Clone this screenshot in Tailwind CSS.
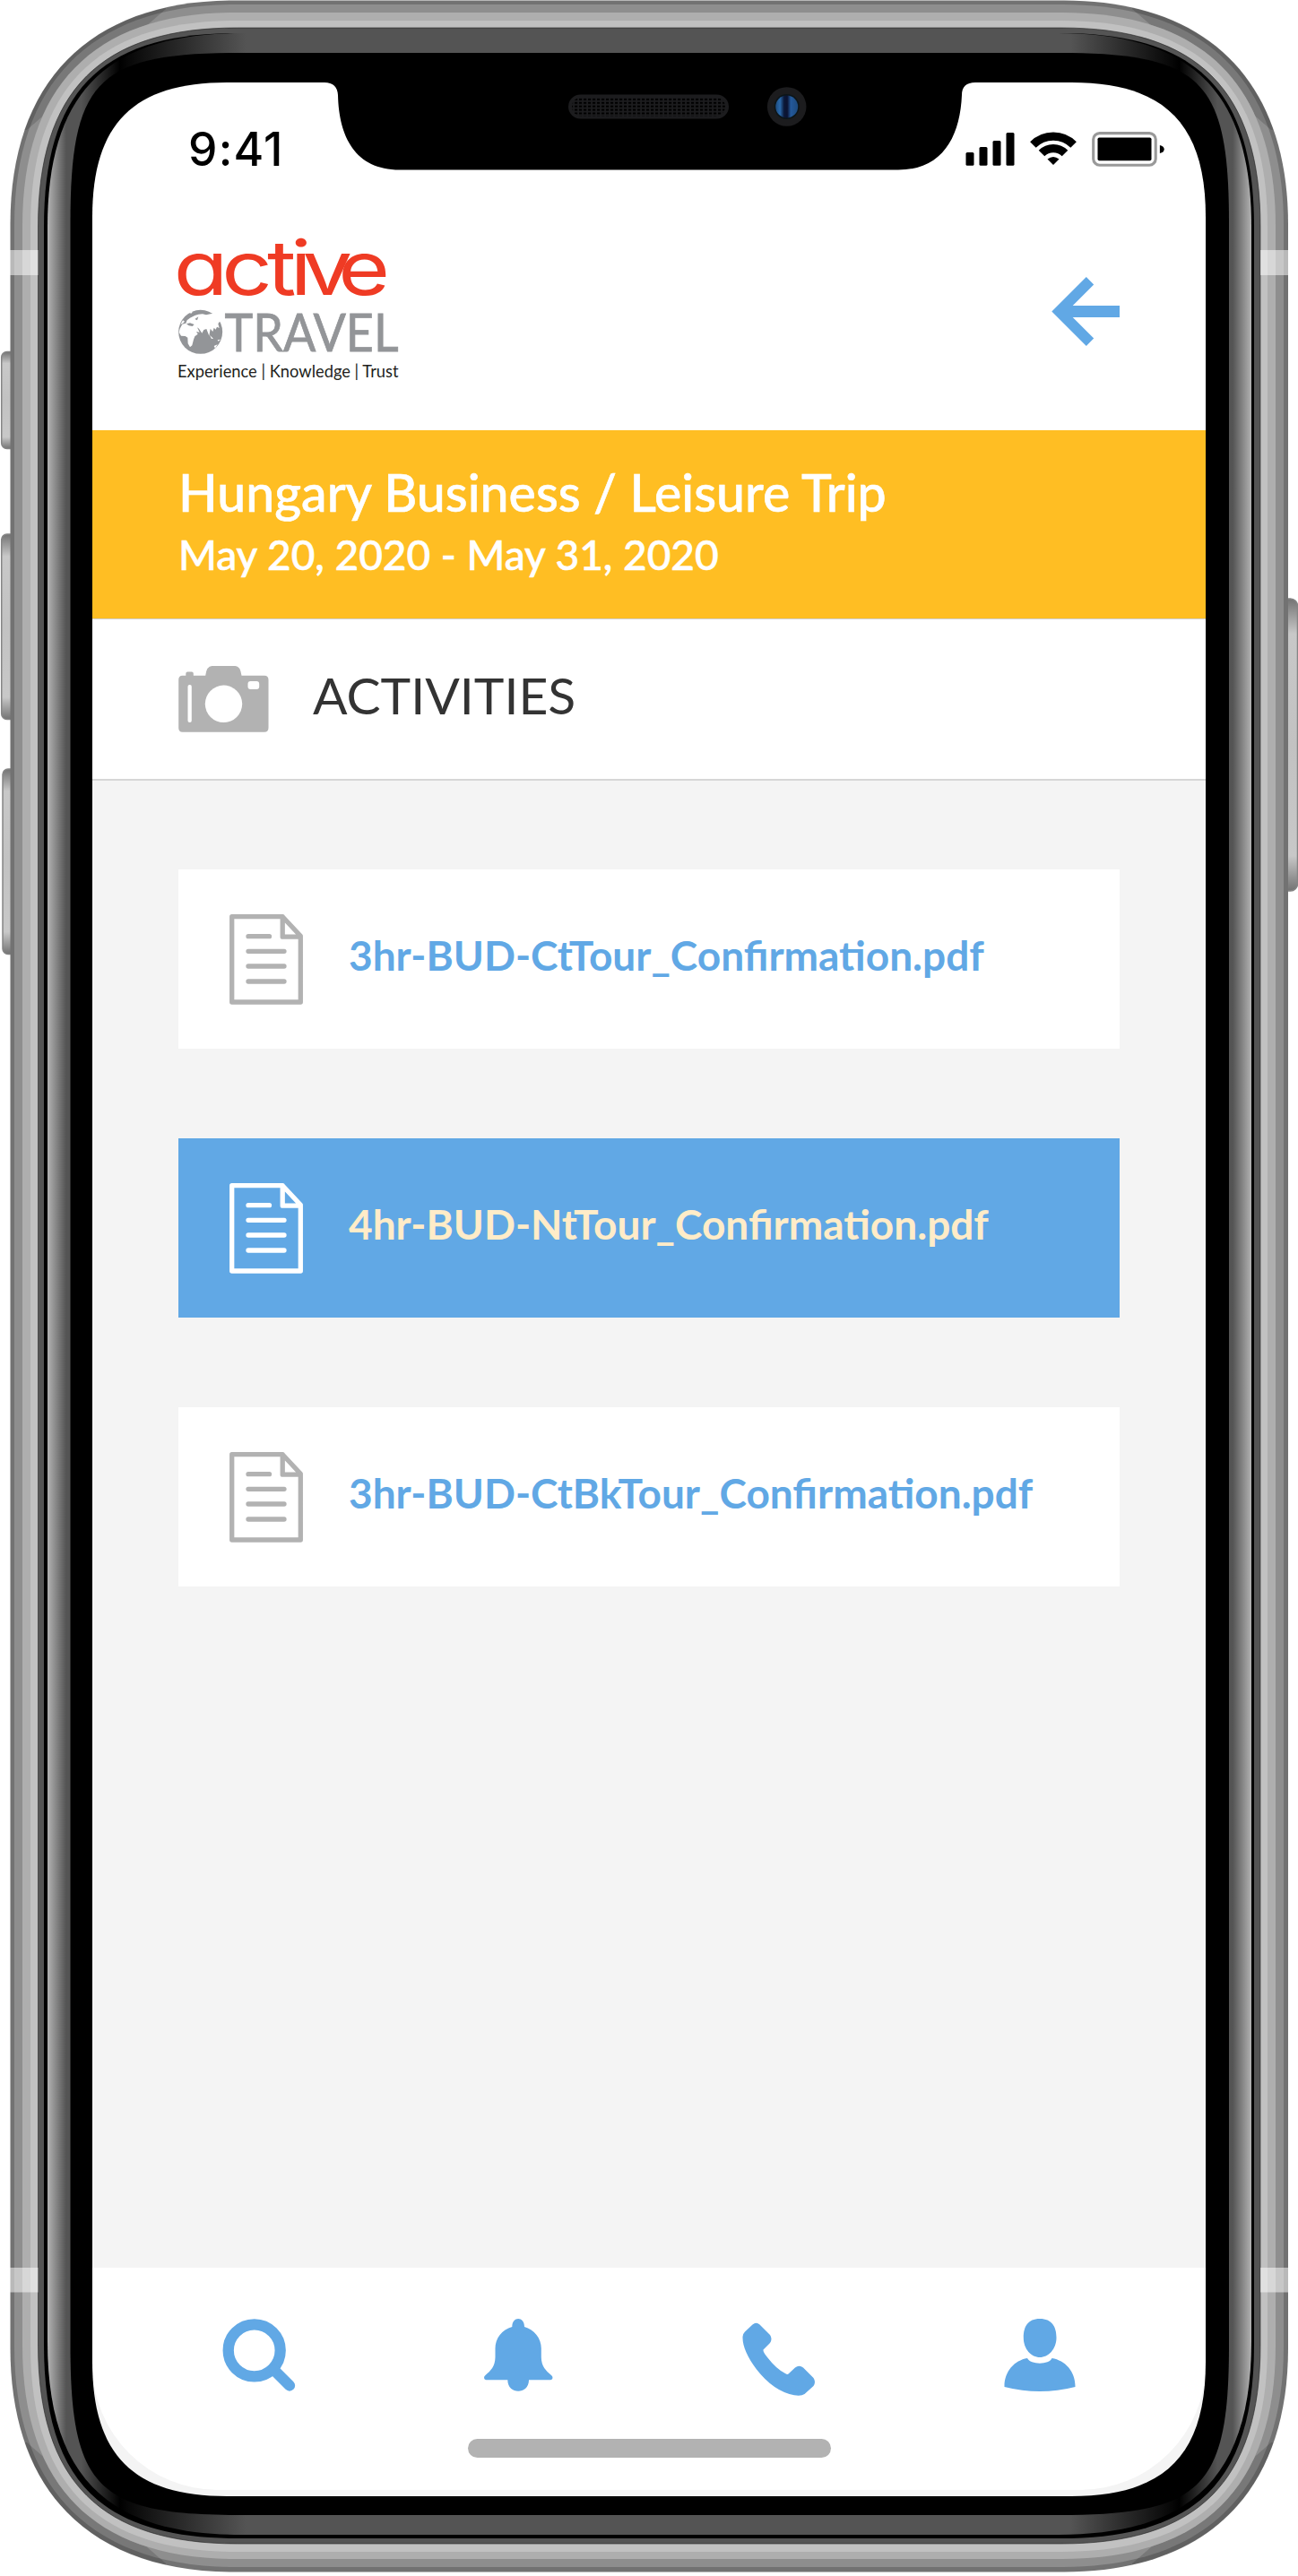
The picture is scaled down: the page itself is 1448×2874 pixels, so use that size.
<!DOCTYPE html>
<html lang="en">
<head>
<meta charset="utf-8">
<title>Activities</title>
<script src="https://cdn.jsdelivr.net/npm/@tailwindcss/browser@4"></script>
</head>
<body class="bg-white">
<div class="relative w-[1448px] h-[2874px] overflow-hidden bg-white pt-[92px] pl-[103px] font-['Lato',sans-serif]">

  <main class="w-[1242px] h-[2693px] bg-[#f4f4f4] flex flex-col">
    <!-- status bar and header -->
    <header class="h-[388px] shrink-0 bg-white flex flex-col">
      <div class="h-[150px] flex items-start justify-between pl-[107px] pr-[46px]">
        <span class="pt-[42px] text-[51.5px] leading-[64px] font-medium text-black font-['Inter',sans-serif] tracking-[1.2px]">9:41</span>
        <svg class="mt-[55px] w-[222px] h-[39px]" viewBox="1077.5 147 222 39">
          <rect x="1078" y="170" width="9" height="14.8" rx="1.5"/>
          <rect x="1093" y="164" width="9" height="20.8" rx="1.5"/>
          <rect x="1108" y="157" width="9" height="27.8" rx="1.5"/>
          <rect x="1123" y="148" width="9" height="36.8" rx="1.5"/>
          <g fill="none" stroke="#000">
            <path d="M1152.9 161.5A31.8 31.8 0 0 1 1198.1 161.5" stroke-width="9.2"/>
            <path d="M1162.5 171A18.3 18.3 0 0 1 1188.5 171" stroke-width="9.2"/>
          </g>
          <path d="M1175.5 184L1169 177.6Q1175.5 172.6 1182 177.6Z"/>
          <rect x="1220.2" y="148.6" width="69.5" height="35.6" rx="7" fill="none" stroke="#999" stroke-width="3.1"/>
          <rect x="1225" y="153.4" width="60" height="25.8" rx="1.8"/>
          <path d="M1294.4 162Q1299.2 163 1299.2 166.5T1294.4 171Z"/>
        </svg>
      </div>
      <div class="flex-1 flex items-start justify-between pl-[77px] pr-[96px]">
        <svg class="mt-[8px] w-[290px] h-[200px] overflow-visible" viewBox="180 250 290 200">
          <text transform="scale(1.18 1)" x="164.300 209.500 252.500 274.400 286 319.800" y="329.500" font-size="84" fill="#ef3b24" class="font-['Inter',sans-serif] [font-feature-settings:'cv11']">active</text>
          <g transform="translate(180 250) scale(.3333)">
            <circle cx="131" cy="361" r="73.5" fill="#939598"/>
            <path fill="#fff" d="M62 350L70 335L82 332L86 322L96 314L112 306L124 302L138 301L150 304L164 301L176 299L216 310L206 340L196 325L190 334L194 348L186 344L182 353L176 347L172 360L164 350L160 374L151 351L142 354L136 365L126 350L120 346L128 362L117 360L122 368L112 376L108 386L103 406L96 412L89 400L88 380L80 375L66 374L59 362ZM78 326L72 332L64 336L72 322ZM176 408L188 403L180 416Z"/>
            <path fill="#fff" d="M162 372L174 383L168 384ZM188 388L199 386L190 392ZM92 296L106 292L100 299Z"/>
            <path fill="#939598" d="M84 334L96 331L110 336L104 342L92 340ZM112 318L124 310L120 322Z"/>
          </g>
          <text x="250.5" y="391.5" textLength="194" lengthAdjust="spacingAndGlyphs" font-size="59" fill="#939598" stroke="#939598" stroke-width=".8" class="font-['Lato',sans-serif]">TRAVEL</text>
          <text x="198" y="421" textLength="246.5" lengthAdjust="spacing" font-size="18.300" fill="#231f20" class="font-['Lato',sans-serif]">Experience | Knowledge | Trust</text>
        </svg>
        <svg class="mt-[67px] w-[76px] h-[77px]" viewBox="1173.5 309 76 77" fill="#61a8e5">
          <path d="M1173.8 347.5L1212.3 309L1220.7 317.5L1197.2 341H1249.5V354H1197.2L1220.7 377.5L1212.3 386Z"/>
        </svg>
      </div>
    </header>

    <!-- trip banner -->
    <section class="h-[210px] shrink-0 bg-[#ffbe23] pl-[96px] text-white font-medium [-webkit-text-stroke:0.6px_#fff]">
      <h1 class="pt-[35px] text-[57.2px] leading-[68px] whitespace-nowrap w-fit">Hungary Business / Leisure Trip</h1>
      <p class="pt-[2px] text-[46px] leading-[68px] whitespace-nowrap w-fit">May 20, 2020 - May 31, 2020</p>
    </section>

    <section class="h-[181px] shrink-0 bg-white border-t border-t-[#cfcfcf] border-b-2 border-b-[#d6d6d6] flex items-start pl-[95.5px]">
      <svg class="mt-[51px] w-[101px] h-[75px]" viewBox="198.5 742 101 75">
        <path fill="#b2b2b2" d="M203 753.8H206.8V751.5Q206.8 749.5 208.8 749.5H213.3Q215.3 749.5 215.3 751.5V753.8H228.7Q230 743 236 743H262Q267.500 743 269 753.8H294.500Q299 753.8 299 758.5V812Q299 816.700 294.500 816.700H203Q198.700 816.700 198.700 812V758.5Q198.700 753.800 203 753.800Z"/>
        <circle cx="249" cy="785.3" r="20.7" fill="#fff"/>
        <rect x="209" y="764" width="4.3" height="42" rx="2" fill="#fff"/>
        <rect x="276" y="760" width="12.700" height="9" rx="3" fill="#fff"/>
      </svg>
      <h2 class="pt-[50px] pl-[49.5px] text-[57px] leading-[68px] text-[#333]">ACTIVITIES</h2>
    </section>

    <!-- documents -->
    <ul class="flex-1 flex flex-col gap-[100px] pt-[99px] px-[96px] text-[46px] leading-[54px] font-bold whitespace-nowrap">
      <li class="h-[200px] bg-white text-[#61a8e5] flex items-start pl-[57px]">
        <svg class="mt-[50px] w-[82px] h-[101px] stroke-[#b2b2b2]" viewBox="0 0 82 101" fill="none" stroke-width="5.300" stroke-linejoin="round" stroke-linecap="round"><path d="M2.700 2.700H59.200L79.300 24.300V98H2.700ZM59.200 2.700V25.200H79M21 24.700H44.500M21 41.300H61M21 58H61M21 75H61"/></svg>
        <span class="pt-[69px] pl-[51px]">3hr-BUD-CtTour_Confirmation.pdf</span>
      </li>
      <li class="h-[200px] bg-[#61a8e5] text-[#ffecc8] flex items-start pl-[57px]">
        <svg class="mt-[50px] w-[82px] h-[101px] stroke-white" viewBox="0 0 82 101" fill="none" stroke-width="5.300" stroke-linejoin="round" stroke-linecap="round"><path d="M2.700 2.700H59.200L79.300 24.300V98H2.700ZM59.200 2.700V25.200H79M21 24.700H44.500M21 41.300H61M21 58H61M21 75H61"/></svg>
        <span class="pt-[69px] pl-[51px]">4hr-BUD-NtTour_Confirmation.pdf</span>
      </li>
      <li class="h-[200px] bg-white text-[#61a8e5] flex items-start pl-[57px]">
        <svg class="mt-[50px] w-[82px] h-[101px] stroke-[#b2b2b2]" viewBox="0 0 82 101" fill="none" stroke-width="5.300" stroke-linejoin="round" stroke-linecap="round"><path d="M2.700 2.700H59.200L79.300 24.300V98H2.700ZM59.200 2.700V25.200H79M21 24.700H44.500M21 41.300H61M21 58H61M21 75H61"/></svg>
        <span class="pt-[69px] pl-[51px]">3hr-BUD-CtBkTour_Confirmation.pdf</span>
      </li>
    </ul>

    <!-- bottom navigation -->
    <nav class="h-[248px] mb-[7px] shrink-0 bg-white rounded-b-[140px] flex flex-col items-center justify-between pb-[36px]">
      <div class="w-full flex items-start justify-between pl-[145px] pr-[145px] pt-[57px]">
        <svg class="w-[82px] h-[82px]" viewBox="248 2587 82 82" fill="none" stroke="#61a8e5"><circle cx="283.700" cy="2622.300" r="29" stroke-width="12.300"/><path d="M306 2644.500L323 2661.500" stroke-width="12.300" stroke-linecap="round"/></svg>
        <svg class="w-[77px] h-[82px]" viewBox="541 2587 77 82" fill="#61a8e5"><path d="M572.300 2596C572.300 2584 586 2584 586 2596C597 2599 604.800 2609 604.800 2620V2630C605 2640 610 2645 616 2650C618.500 2652 617.500 2655.300 615 2655.300H591C591 2672 567.300 2672 567.300 2655.300H543.500C541 2655.300 540 2652 542.500 2650C548.500 2645 553.300 2640 553.500 2630V2620C553.500 2609 561 2599 572.300 2596Z"/></svg>
        <svg class="mt-[4px] w-[82px] h-[82px]" viewBox="829 2591 82 82" fill="#61a8e5"><path d="M840.500 2593.500Q844.500 2590 848.500 2593.500L860 2605Q863 2609.500 860 2614L852.500 2621.500Q852 2624 857 2630Q867 2643 877 2648Q879.500 2649.500 880.500 2648.500L888 2641.500Q892.500 2638 897 2641.500L908.500 2653Q911.500 2657.500 908.500 2662L898.500 2671Q895 2673.500 887 2672.300Q864 2668 845 2643.500Q829 2622 829.500 2607Q829.500 2604 832 2601.500Z"/></svg>
        <svg class="w-[80px] h-[82px]" viewBox="1119.500 2587 80 82" fill="#61a8e5"><path d="M1159.500 2587C1173 2587 1178 2596 1178 2608C1178 2621 1169 2630 1159.500 2630C1150 2630 1141.300 2621 1141.300 2608C1141.300 2596 1146 2587 1159.500 2587ZM1145.500 2631C1149 2638.500 1170 2638.500 1173 2631C1188 2633.500 1199.300 2646 1199 2663Q1159.500 2673 1120 2663C1119.700 2646 1131 2633.500 1145.500 2631Z"/></svg>
      </div>
      <div class="w-[405px] h-[21px] rounded-full bg-[#b2b2b2]"></div>
    </nav>
  </main>

  <!-- device frame laid over the screen -->
  <svg class="absolute left-0 top-0 w-[1448px] h-[2874px] pointer-events-none" viewBox="0 0 1448 2874">
    <defs>
      <linearGradient id="glint" gradientUnits="userSpaceOnUse" x1="53" x2="1396" y1="0" y2="0">
        <stop offset="0" stop-color="#b2b2b2"/><stop offset=".0155" stop-color="#545454"/><stop offset=".028" stop-color="#545454"/><stop offset=".06" stop-color="#000"/><stop offset=".068" stop-color="#080808"/><stop offset=".165" stop-color="#545454"/>
        <stop offset=".85" stop-color="#545454"/><stop offset=".932" stop-color="#080808"/><stop offset=".94" stop-color="#000"/><stop offset=".972" stop-color="#545454"/><stop offset=".9845" stop-color="#545454"/><stop offset="1" stop-color="#b2b2b2"/>
      </linearGradient>
      <linearGradient id="key" x1="0" x2="0" y1="0" y2="1"><stop offset="0" stop-color="#737373"/><stop offset=".12" stop-color="#c8c8c8"/><stop offset=".5" stop-color="#c2c2c2"/><stop offset=".88" stop-color="#c8c8c8"/><stop offset="1" stop-color="#737373"/></linearGradient>
      <linearGradient id="lens" x1="0" x2="1" y1="0" y2="0"><stop offset="0" stop-color="#1d4a7d"/><stop offset=".2" stop-color="#2a69ab"/><stop offset=".38" stop-color="#0b1838"/><stop offset=".52" stop-color="#0b1230"/><stop offset=".68" stop-color="#24599a"/><stop offset="1" stop-color="#1d4a7d"/></linearGradient>
      <pattern id="mesh" width="5" height="3.900" patternUnits="userSpaceOnUse" x="635" y="105"><rect x="1" y="1" width="3.200" height="2" fill="#000"/></pattern>
      <mask id="hole" maskUnits="userSpaceOnUse" x="0" y="0" width="1448" height="2874">
        <rect width="1448" height="2874" fill="#fff"/>
        <path fill="#000" d="M103 242c0-104 46-150 150-150H1195c104 0 150 46 150 150V2635c0 104-46 150-150 150H253c-104 0-150-46-150-150Z"/>
        <path fill="#fff" d="M362 90V92Q376 92 377 106C378 152 396 189.500 446 189.500H1002C1052 189.500 1071 152 1073 106Q1073 92 1088 92V90Z"/>
      </mask>
      <clipPath id="band"><path clip-rule="evenodd" d="M11 251c0-160 90-250 250-250H1187c160 0 250 90 250 250V2619c0 160-90 250-250 250H261c-160 0-250-90-250-250ZM25 252c0-157 81-238 238-238H1185c157 0 238 81 238 238V2617c0 157-81 238-238 238H263c-157 0-238-81-238-238Z"/></clipPath>
    </defs>
    <g stroke="#858585" stroke-width="1.500" fill="url(#key)">
      <rect x="1.700" y="392.500" width="20" height="108" rx="6"/>
      <rect x="1.700" y="596" width="20" height="206.500" rx="6"/>
      <rect x="3" y="858" width="20" height="206.500" rx="6"/>
      <rect x="1427" y="668" width="20.500" height="326" rx="8"/>
    </g>
    <g mask="url(#hole)">
      <path fill="#727272" d="M11.500 250c0-160 90-249.500 250-249.500H1187c160 0 250 90 250 250V2619.500c0 160-90 250-250 250H261c-160 0-249.500-90-249.500-250Z"/>
      <path fill="#8e8e8e" d="M16 251c0-159 87-246 246-246H1186c159 0 246 87 246 246V2618c0 159-87 246-246 246H262c-159 0-246-87-246-246Z"/>
      <g clip-path="url(#band)" fill="#000" fill-opacity=".15">
        <path d="M30 145L185 10V-10H-10V145Z"/><path d="M1418 145L1263 10V-10H1458V145Z"/>
        <path d="M30 2725L185 2860V2880H-10V2725Z"/><path d="M1418 2725L1263 2860V2880H1458V2725Z"/>
      </g>
      <path fill="#aeaeae" d="M25 252c0-157 81-238 238-238H1185c157 0 238 81 238 238V2617c0 157-81 238-238 238H263c-157 0-238-81-238-238Z"/>
      <path fill="#c1c1c1" d="M34 253c0-155 75-230 230-230H1184c155 0 230 75 230 230V2617c0 155-75 230-230 230H264c-155 0-230-75-230-230Z"/>
      <path fill="#545454" stroke="#222" stroke-width=".6" d="M42.500 253c0-152 70-222 222-222H1184c152 0 222 70 222 222V2616c0 152-70 222-222 222H264.500c-152 0-222-70-222-222Z"/>
      <path fill="#000" d="M49 253c0-152 64-216 216-216H1183c152 0 216 64 216 216V2616c0 152-64 216-216 216H265c-152 0-216-64-216-216Z"/>
      <path fill="url(#glint)" d="M53 253c0-150 66-216 216-216H1180c150 0 216 66 216 216V2612c0 150-66 216-216 216H269c-150 0-216-66-216-216Z"/>
      <path fill="#000" d="M78.500 249c0-160 30-190 190-190H1181c160 0 190 30 190 190V2616c0 160-30 190-190 190H268.500c-160 0-190-30-190-190Z"/>
      <g fill="#fff" fill-opacity=".5">
        <rect x="11" y="279" width="31.500" height="28"/><rect x="1406" y="279" width="31" height="28"/>
        <rect x="11" y="2530" width="31.500" height="27.500"/><rect x="1406" y="2530" width="31" height="27.500"/>
      </g>
      <rect x="634" y="105.500" width="179" height="27" rx="13.500" fill="#1c1c1e"/>
      <rect x="638" y="108.500" width="171" height="21" rx="10.500" fill="url(#mesh)"/>
      <circle cx="877.700" cy="119" r="21.800" fill="#1c1c1e"/>
      <circle cx="877.700" cy="119" r="14" fill="#0c1518"/>
      <circle cx="877.700" cy="119" r="12.500" fill="url(#lens)"/>
    </g>
  </svg>
</div>
</body>
</html>
